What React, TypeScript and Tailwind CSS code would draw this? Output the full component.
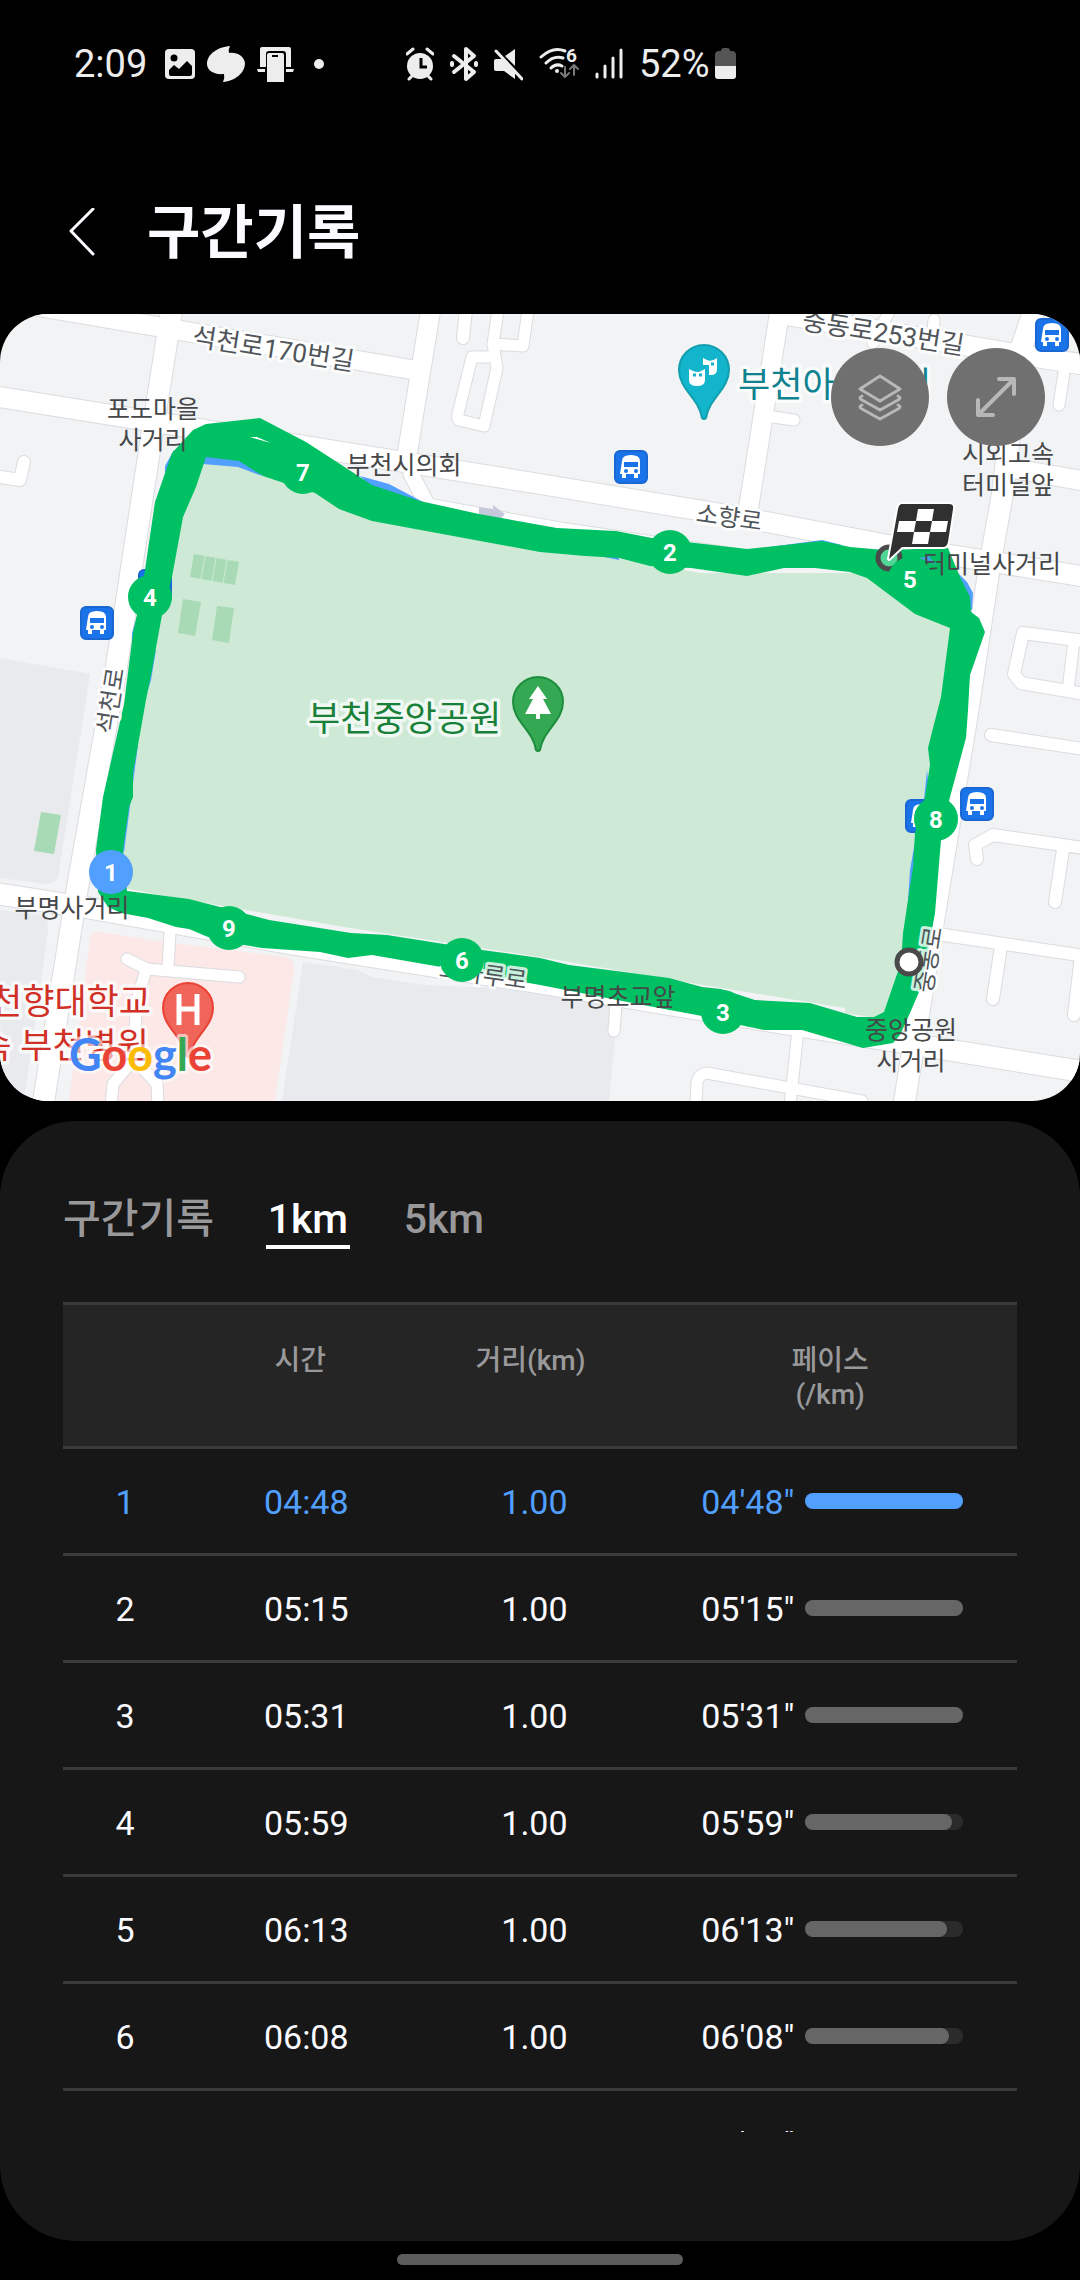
import { useState } from "react"

const laps = [
  { id: 1, time: "04:48", distance: "1.00", pace: "04'48\"", percent: 100 },
  { id: 2, time: "05:15", distance: "1.00", pace: "05'15\"", percent: 100 },
  { id: 3, time: "05:31", distance: "1.00", pace: "05'31\"", percent: 100 },
  { id: 4, time: "05:59", distance: "1.00", pace: "05'59\"", percent: 93 },
  { id: 5, time: "06:13", distance: "1.00", pace: "06'13\"", percent: 90 },
  { id: 6, time: "06:08", distance: "1.00", pace: "06'08\"", percent: 91 },
  { id: 7, time: "06:10", distance: "1.00", pace: "06'10\"", percent: 91 },
]

const tabs = ["구간기록", "1km", "5km"]

const markers = [
  { id: 9, x: 229, y: 928 },
  { id: 8, x: 936, y: 819 },
  { id: 7, x: 303, y: 472 },
  { id: 6, x: 462, y: 960 },
  { id: 5, x: 910, y: 579 },
  { id: 4, x: 150, y: 597 },
  { id: 3, x: 723, y: 1012 },
  { id: 2, x: 670, y: 552 },
  { id: 1, x: 111, y: 872 },
]

const busStops = [
  { x: 97, y: 623 },
  { x: 631, y: 467 },
  { x: 1052, y: 335 },
  { x: 977, y: 804 },
]

const roads = [
  { d: "M0 300L420 371", w: 19 },
  { d: "M171 314L152 434L116 670L77 890L43 1105", w: 21 },
  { d: "M0 397L540 484L740 517L888 545L1080 576", w: 20 },
  { d: "M430 314L407 455", w: 19 },
  { d: "M411 474L428 506L560 530L760 560", w: 15 },
  { d: "M780 310L749 505", w: 19 },
  { d: "M780 314L1010 353L1080 364", w: 20 },
  { d: "M1034 310L1020 352L1002 497L990 563L968 710L956 783L932 930L904 1105", w: 21 },
  { d: "M1010 468L1090 482", w: 19 },
  { d: "M0 894L83 907L298 945L540 983L702 1010L793 1025L955 1051L1085 1072", w: 21 },
  { d: "M466 310L463 338", w: 12 },
  { d: "M498 310L493 344L523 346L528 310", w: 11 },
  { d: "M493 344L497 368L484 426L459 420Q457 418 458 414L472 357L491 357", w: 11 },
  { d: "M1065 366L1059 405", w: 11 },
  { d: "M934 320L932 340", w: 11 },
  { d: "M889 312L873 343", w: 11 },
  { d: "M766 416L794 420", w: 11 },
  { d: "M24 462L20 480L-5 476", w: 12 },
  { d: "M1085 641L1023 633L1014 674L1021 683L1085 694", w: 12 },
  { d: "M1074 641L1068 690", w: 11 },
  { d: "M991 735L1090 750", w: 12 },
  { d: "M977 859L975 845L993 835L1090 849", w: 12 },
  { d: "M1063 850L1055 902", w: 12 },
  { d: "M944 935L1085 956", w: 12 },
  { d: "M1001 946L993 999", w: 12 },
  { d: "M1081 956L1074 1015", w: 12 },
  { d: "M616 1003L614 1031", w: 11 },
  { d: "M798 1030L790 1105", w: 11 },
  { d: "M696 1105L697 1082Q699 1074 707 1073L862 1101", w: 11 },
  { d: "M170 933L168 968", w: 11 },
  { d: "M127 959L147 969L239 977", w: 11 },
  { d: "M146 970L137 1000L133 1060L113 1084L111 1105", w: 11 },
  { d: "M135 1060L157 1084L158 1105", w: 11 },
]

// sub paths: outer edge, inner edge, small gap near marker 7
const routePath =
  "M206 424L260 418L306 442L340 464L372 485L420 501L479 514L540 525L557 528L616 531L652 538L704 544L747 549L822 541L850 547L884 550L948 548L960 577L970 597L971 612L979 618L985 632L970 675L968 710L966 738L950 797L941 840L935 913L922 985L910 1013L900 1035L893 1043L863 1048L802 1030L764 1030L740 1025L702 1016L643 1005L540 985L441 967L372 955L348 958L320 952L262 948L244 945L208 937L189 929L176 927L148 918L121 913L108 907L98 892L96 850L103 797L124 704L133 633L138 610L145 570L155 502L172 453L193 430Z" +
  "M206 457L239 461L263 476L284 483L315 493L339 509L372 521L540 552L585 556L619 558L650 566L691 568L747 576L784 568L815 568L850 572L867 578L915 614L950 628L941 697L932 732L928 748L930 765L925 797L915 833L913 867L903 933L901 963L896 977L884 1012L874 1017L857 1017L810 1003L755 1000L721 989L702 987L669 978L616 971L569 965L540 958L482 950L387 935L351 933L269 920L220 907L189 899L127 891L123 850L129 807L133 797L133 773L146 700L151 675L162 615L172 577L183 517L196 487Z" +
  "M250 437L257 437L271 443Z"

const StatusBar = () => {
  return (
    <div className="flex h-32 items-center pl-[74px] text-[38px] leading-none text-[#ededed]">
      <span className="w-[79px]">2:09</span>
      <div className="ml-3 flex items-center gap-3">
        <svg className="h-9 w-[30px]" viewBox="0 0 30 36" fill="currentColor">
          <rect y="3" width="30" height="30" rx="4" />
          <circle cx="9" cy="12" r="3.5" fill="#000" />
          <path d="M4 24l5-5 5 4 8-8 5 5v8q0 2-2 2H6q-2 0-2-2z" fill="#000" />
        </svg>
        <svg className="h-9 w-[38px]" viewBox="0 0 38 36" fill="currentColor">
          <path d="M23 0q-2 4-1 7c8-1 15 3 16 10C38 27 28 35 16 36q2-4 1-8C8 29 0 25 0 18 0 8 11 1 23 0z" />
        </svg>
        <svg className="h-9 w-[37px]" viewBox="0 0 37 36" fill="currentColor">
          <path d="M5 1h27q2 0 2 2v18h-5V8q0-3-3-3H12q-3 0-3 3v13H3V3q0-2 2-2zM0 23h8v3H1zM29 23h8l-1 3h-7z" />
          <path d="M12 7h13q2 0 2 2v27H10V9q0-2 2-2z" />
          <path d="M15 10h6" stroke="#000" strokeWidth="2" />
        </svg>
        <svg className="ml-2 size-[10px]" viewBox="0 0 10 10" fill="currentColor">
          <circle cx="5" cy="5" r="5" />
        </svg>
      </div>
      <div className="ml-[82px] flex items-center gap-4">
        <svg className="h-9 w-[28px]" viewBox="0 0 28 36" fill="currentColor">
          <circle cx="14" cy="20" r="13" />
          <path d="M1 8l6-5M27 8l-6-5M6 30l-3 3M22 30l3 3" stroke="currentColor" strokeWidth="3" strokeLinecap="round" />
          <path d="M15 12v9h6" fill="none" stroke="#000" strokeWidth="3" />
        </svg>
        <svg className="h-9 w-[28px]" viewBox="0 0 28 36" fill="none" stroke="currentColor" strokeWidth="4" strokeLinejoin="round" strokeLinecap="round">
          <path d="M4 10l20 16-8 7V3l8 7L4 26" />
          <path d="M2 17v2M26 17v2" />
        </svg>
        <svg className="h-9 w-[29px]" viewBox="0 0 29 36" fill="currentColor">
          <path d="M11 10L21 3v17zM2 13h6l13 14v6L10 25H2q-2 0-2-2v-8q0-2 2-2z" />
          <path d="M2 5l26 28" stroke="currentColor" strokeWidth="3" strokeLinecap="round" />
        </svg>
        <svg className="h-9 w-[40px]" viewBox="0 0 40 36" fill="none" stroke="currentColor" strokeWidth="3" strokeLinecap="round">
          <path d="M2 11Q14 0 26 5M7 17Q15 9 24 12M12 22q5-5 11-2" />
          <circle cx="18" cy="25" r="2" fill="currentColor" stroke="none" />
          <path d="M26 21v10m-4-4l4 4 4-4M35 29V19m-4 4l4-4 4 4" stroke="#777" strokeWidth="2" />
          <text x="27" y="16" fill="currentColor" stroke="none" fontSize="19" fontWeight="700">6</text>
        </svg>
        <svg className="h-9 w-[28px]" viewBox="0 0 28 36" stroke="currentColor" strokeWidth="3" strokeLinecap="round">
          <path d="M2 28v3M10 20v11M18 12v19M26 4v27" />
        </svg>
        <div className="flex items-center gap-[5px]">
          <span>52%</span>
          <svg className="h-9 w-[21px]" viewBox="0 0 21 36">
            <path d="M6 5q0-3 3-3h3q3 0 3 3h2q4 0 4 4v11H0V9q0-4 4-4z" fill="#555" />
            <path d="M0 20h21v10q0 3-3 3H3q-3 0-3-3z" fill="currentColor" />
          </svg>
        </div>
      </div>
    </div>
  )
}

const BusIcon = ({ x, y }: { x: number; y: number }) => {
  return (
    <g transform={`translate(${x} ${y})`}>
      <rect x="-16" y="-16" width="32" height="32" rx="5" fill="#1a73e8" stroke="#1967d2" strokeWidth="2" />
      <path d="M-9-6q0-6 9-6t9 6V7h-2v4h-4V7h-8v4h-4V7h-2z" fill="#fff" />
      <path d="M-7-5H7v5H-7z" fill="#1a73e8" />
      <circle cx="-5" cy="4" r="2" fill="#1a73e8" />
      <circle cx="5" cy="4" r="2" fill="#1a73e8" />
    </g>
  )
}

const Pin = ({ x, y, fill, stroke, children }: { x: number; y: number; fill: string; stroke: string; children: React.ReactNode }) => {
  return (
    <g transform={`translate(${x} ${y})`}>
      <path
        d="M0-25A25 25 0 0 1 25 0C25 19 5 28 2 48Q0 50-2 48C-5 28-25 19-25 0A25 25 0 0 1 0-25z"
        fill={fill}
        stroke={stroke}
        strokeWidth="2"
      />
      {children}
    </g>
  )
}

const RouteMap = () => {
  return (
    <svg
      className="block w-full"
      viewBox="0 314 1080 787"
      role="img"
      aria-label="부천중앙공원"
    >
      <rect y="314" width="1080" height="787" fill="#f1f3f4" />
      <g fill="#e8eaed">
        <path d="M0 658L90 674L86 700L58 877Q55 884 46 884L0 878z" />
        <path d="M0 910L40 915Q49 918 48 930L24 1101H0z" />
        <path d="M303 962L358 970L372 977L424 985L540 990L618 1006L609 1101H282z" />
      </g>
      <path d="M90 938Q91 931 98 932L165 942L286 957Q295 960 294 970L275 1101H69z" fill="#fce8e6" />
      <path d="M41 812L61 815L54 854L34 851z" fill="#a8dab5" />
      <g fill="none" stroke="#dadce0" strokeLinecap="round" strokeLinejoin="round">
        {roads.map((road) => <path key={road.d} d={road.d} strokeWidth={road.w + 2} />)}
      </g>
      <g fill="none" stroke="#fff" strokeLinecap="round" strokeLinejoin="round">
        {roads.map((road) => <path key={road.d} d={road.d} strokeWidth={road.w} />)}
      </g>
      <path d="M479 514v-7l14 2v-4l12 9-7 7z" fill="#c6c9dc" />
      <path
        d="M182 466L205 452L260 470L340 500L540 545L700 573L860 573L960 620L945 700L930 800L908 950L890 1020L845 1013V1008L691 983L540 957L344 927L155 894L110 885L132 700L150 560z"
        fill="#ceead6"
      />
      <path d="M194 554L239 562L235 585L190 577zM183 599L201 602L195 636L178 633zM217 606L234 608L229 643L212 640z" fill="#a8dab5" />
      <path d="M205 556l-4 23M216 558l-4 23M227 560l-4 23" stroke="#ceead6" />

      <g fill="#519fff">
        <path d="M174 450L165 466L165 478L176 478zM203 450L242 456L262 476L238 467L203 464z" />
        <path d="M360 476L389 484L425 503L380 495zM142 600L132 633V642L140 640zM148 690L151 680L156 650L150 650z" />
        <path d="M740 551L822 540L842 545L822 550zM955 570L967 582L973 593L972 610L960 605z" />
        <path d="M917 830L910 870L906 930L915 900zM133 740L138 745L124 852L120 850zM585 553L619 560V555z" />
        <path d="M927 770L924 800L930 800z" />
      </g>
      <BusIcon x={155} y={586} />
      <BusIcon x={922} y={816} />
      <path d={routePath} fill="#00c064" fillRule="evenodd" />
      <path d="M919 558l10-2 7 9-9-4z" fill="#3fa5e0" />
      {busStops.map((stop) => <BusIcon key={stop.x} x={stop.x} y={stop.y} />)}

      <Pin x={704} y={370} fill="#12b5cb" stroke="#129eaf">
        <path d="M-1-12l4 2q5 2 10-2v11q0 6-6 6h-2V-5h-6z" fill="#fff" />
        <path d="M-15-1l4 2q5 2 8 0l4-2v11q0 6-8 6t-8-6z" fill="#fff" />
        <path d="M-11 5h3M-5 5h3M7-6h3" stroke="#12b5cb" strokeWidth="3" />
      </Pin>
      <Pin x={538} y={702} fill="#34a853" stroke="#1e8e3e">
        <path d="M0-16l9 13H5l8 15H2v5h-4v-5h-11l8-15h-4z" fill="#fff" />
      </Pin>
      <Pin x={188} y={1008} fill="#f0655a" stroke="#ea4335">
        <path d="M-9-14v31M9-14v31M-9 1H9" stroke="#fff" strokeWidth="5" />
      </Pin>

      <g fontSize="25" fill="#454748" textAnchor="middle">
        <text x="153" y="418">포도마을</text>
        <text x="153" y="449">사거리</text>
        <text x="404" y="474">부천시의회</text>
        <text x="1008" y="463">시외고속</text>
        <text x="1008" y="494">터미널앞</text>
        <text x="992" y="573">터미널사거리</text>
        <text x="72" y="917">부명사거리</text>
        <text x="618" y="1006">부명초교앞</text>
        <text x="911" y="1039">중앙공원</text>
        <text x="911" y="1070">사거리</text>
      </g>
      <g fontSize="26" fill="#50555a" textAnchor="middle" stroke="#fff" strokeWidth="6" strokeOpacity="0.8" strokeLinejoin="round" paintOrder="stroke">
        <text transform="translate(272 358) rotate(9)">석천로170번길</text>
        <text transform="translate(882 342) rotate(9)">중동로253번길</text>
        <text fontSize="24" transform="translate(728 526) rotate(8)">소향로</text>
        <text fontSize="24" transform="translate(482 983) rotate(8)">조마루로</text>
        <text fontSize="24" transform="translate(119 702) rotate(-81)">석천로</text>
        <text fontSize="24" transform="translate(937 961) rotate(-81)">중동로</text>
      </g>
      <g fontSize="35" stroke="#fff" strokeWidth="7" strokeOpacity="0.7" strokeLinejoin="round" paintOrder="stroke">
        <text x="738" y="397" fill="#0f828f">부천아트센터</text>
        <text x="308" y="731" fill="#188038">부천중앙공원</text>
        <text x="151" y="1014" fill="#d03025" textAnchor="end">순천향대학교</text>
        <text x="149" y="1058" fill="#d03025" textAnchor="end">부속 부천병원</text>
      </g>
      <text x="69" y="1071" fontFamily="Lato, sans-serif" fontSize="45" fontWeight="700" stroke="#fff" strokeWidth="6" strokeOpacity="0.6" strokeLinejoin="round" paintOrder="stroke">
        <tspan fill="#4285f4">G</tspan>
        <tspan fill="#ea4335">o</tspan>
        <tspan fill="#fbbc05">o</tspan>
        <tspan fill="#4285f4">g</tspan>
        <tspan fill="#34a853">l</tspan>
        <tspan fill="#ea4335">e</tspan>
      </text>

      <circle cx="909" cy="962" r="12" fill="#fff" stroke="#4a4a4a" strokeWidth="5" />
      <circle cx="889" cy="558" r="11" fill="#4fd594" stroke="#4a4a4a" strokeWidth="5" />
      {markers.map((marker) => (
        <g key={marker.id}>
          <circle cx={marker.x} cy={marker.y} r="22" fill={marker.id === 1 ? "#519fff" : "#00c064"} />
          <text x={marker.x} y={marker.y + 9} fontSize="24" fontWeight="700" fill="#fff" textAnchor="middle">
            {marker.id}
          </text>
        </g>
      ))}
      <path d="M902 504h47q5 0 4 5l-5 33q-1 5-5 5h-41l-13 12 9-50q1-5 4-5z" fill="#303030" stroke="#fff" strokeWidth="4" strokeLinejoin="round" paintOrder="stroke" />
      <path d="M918 509h16l-2 12h16l-2 11h-16l-2 12h-16l2-12h-17l2-11h17zM916 521l-2 11h16l2-11z" fill="#fff" fillRule="evenodd" />
    </svg>
  )
}

const LapTable = () => {
  return (
    <table className="w-full table-fixed border-separate border-spacing-0 text-center">
      <thead>
        <tr className="h-[147px] bg-[#252525] text-[28px] leading-[34px] text-[#99999b]">
          <th className="w-[13%] border-y-3 border-[#3a3a3a]" aria-label="구간"></th>
          <th className="w-[25%] border-y-3 border-[#3a3a3a] pt-[39px] pr-3 align-top font-medium">시간</th>
          <th className="w-[22%] border-y-3 border-[#3a3a3a] pt-[39px] align-top font-medium">거리(km)</th>
          <th className="w-[40%] border-y-3 border-[#3a3a3a] pt-[39px] pl-2 align-top font-medium">
            페이스<br />(/km)
          </th>
        </tr>
      </thead>
      <tbody>
        {laps.map((lap) => {
          const best = lap.id === 1
          return (
            <tr key={lap.id} className={best ? "h-[107px] text-[34px] text-[#519fff]" : "h-[107px] text-[34px] text-[#fafaff]"}>
              <td className="border-b-3 border-[#3a3a3a] pt-0.5">{lap.id}</td>
              <td className="border-b-3 border-[#3a3a3a] pt-0.5">{lap.time}</td>
              <td className="border-b-3 border-[#3a3a3a] pt-0.5 pl-2">{lap.distance}</td>
              <td className="border-b-3 border-[#3a3a3a] pl-3">
                <div className="flex items-center justify-center gap-3">
                  <span className="w-[92px] pt-0.5 text-left">{lap.pace}</span>
                  <div className="h-4 w-[158px] rounded-full bg-[#2b2b2b]">
                    <div
                      className={best ? "h-full rounded-full bg-[#519fff]" : "h-full rounded-full bg-[#666666]"}
                      style={{ width: `${lap.percent}%` }}
                    />
                  </div>
                </div>
              </td>
            </tr>
          )
        })}
      </tbody>
    </table>
  )
}

export default function App() {
  const [tab, setTab] = useState("1km")

  return (
    <div className="flex min-h-screen flex-col bg-black font-[Roboto,'Noto_Sans_CJK_KR',sans-serif]">
      <StatusBar />
      <header className="flex h-[186px] items-center gap-[51px] pt-[24px] pl-[68px] text-[#fafaff]">
        <button aria-label="뒤로">
          <svg className="h-[50px] w-[28px]" viewBox="0 0 28 50" fill="none" stroke="currentColor" strokeWidth="3" strokeLinecap="round" strokeLinejoin="round">
            <path d="M25 1L3 23l22 23" />
          </svg>
        </button>
        <h1 className="text-[58px] leading-none font-bold">구간기록</h1>
      </header>

      <section className="relative overflow-hidden rounded-[48px]">
        <RouteMap />
        <div className="absolute top-[34px] right-[35px] flex gap-[18px] text-[#b8b8b8]">
          <button className="flex size-[98px] items-center justify-center rounded-full bg-[#707070]" aria-label="지도 유형">
            <svg className="size-12" viewBox="0 0 48 48" fill="none" stroke="currentColor" strokeWidth="3" strokeLinejoin="round" strokeLinecap="round">
              <path d="M24 3l20 13-20 12L4 16z" />
              <path d="M6 23q-4 2 0 4l18 10 18-10q4-2 0-4M6 32q-4 2 0 4l18 10 18-10q4-2 0-4" />
            </svg>
          </button>
          <button className="flex size-[98px] items-center justify-center rounded-full bg-[#707070]" aria-label="전체 화면">
            <svg className="size-12" viewBox="0 0 48 48" fill="none" stroke="currentColor" strokeWidth="4" strokeLinejoin="round" strokeLinecap="round">
              <path d="M7 41L41 7M27 6h15v15M6 27v15h15" />
            </svg>
          </button>
        </div>
      </section>

      <main className="mt-5 flex-1 rounded-[76px] bg-[#171717] px-[63px] pt-[73px]">
        <nav className="flex gap-[52px] text-[41px] leading-[50px] font-medium">
          {tabs.map((name) => (
            <button
              key={name}
              onClick={() => setTab(name)}
              className={name === tab
                ? "min-w-[84px] border-b-4 border-white pb-px text-white"
                : "min-w-[84px] border-b-4 border-transparent pb-px text-[#99999b]"}
            >
              {name}
            </button>
          ))}
        </nav>
        <div className="mt-[53px] h-[830px] overflow-hidden">
          <LapTable />
        </div>
      </main>

      <div className="mx-auto mt-[13px] mb-[15px] h-[11px] w-[286px] rounded-full bg-[#5c5c5c]" />
    </div>
  )
}
